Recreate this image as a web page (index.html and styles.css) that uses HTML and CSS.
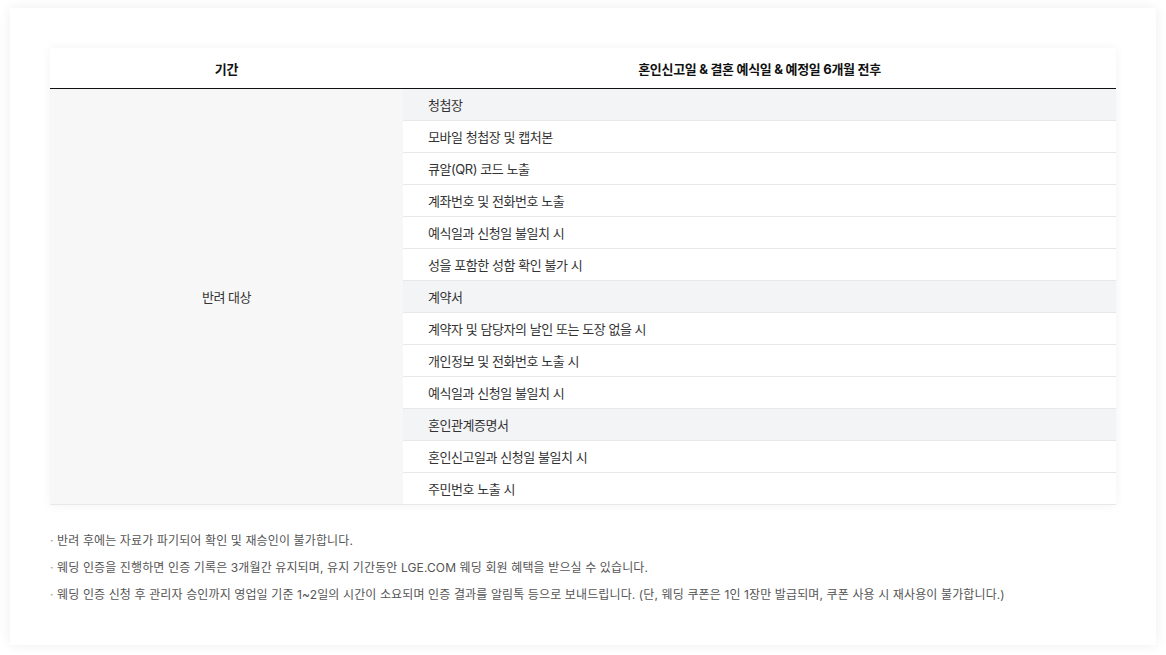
FILE: index.html
```html
<!DOCTYPE html>
<html lang="ko">
<head>
<meta charset="utf-8">
<link rel="stylesheet" href="styles.css">
</head>
<body>
<div class="card">
  <table class="tbl">
    <thead>
      <tr>
        <th class="col-left">기간</th>
        <th>혼인신고일 &amp; 결혼 예식일 &amp; 예정일 6개월 전후</th>
      </tr>
    </thead>
    <tbody>
      <tr><td class="col-left" rowspan="13">반려 대상</td><td class="grp">청첩장</td></tr>
      <tr><td>모바일 청첩장 및 캡처본</td></tr>
      <tr><td>큐알(QR) 코드 노출</td></tr>
      <tr><td>계좌번호 및 전화번호 노출</td></tr>
      <tr><td>예식일과 신청일 불일치 시</td></tr>
      <tr><td>성을 포함한 성함 확인 불가 시</td></tr>
      <tr><td class="grp">계약서</td></tr>
      <tr><td>계약자 및 담당자의 날인 또는 도장 없을 시</td></tr>
      <tr><td>개인정보 및 전화번호 노출 시</td></tr>
      <tr><td>예식일과 신청일 불일치 시</td></tr>
      <tr><td class="grp">혼인관계증명서</td></tr>
      <tr><td>혼인신고일과 신청일 불일치 시</td></tr>
      <tr><td>주민번호 노출 시</td></tr>
    </tbody>
  </table>
  <ul class="notes">
    <li>반려 후에는 자료가 파기되어 확인 및 재승인이 불가합니다.</li>
    <li>웨딩 인증을 진행하면 인증 기록은 3개월간 유지되며, 유지 기간동안 LGE.COM 웨딩 회원 혜택을 받으실 수 있습니다.</li>
    <li>웨딩 인증 신청 후 관리자 승인까지 영업일 기준 1~2일의 시간이 소요되며 인증 결과를 알림톡 등으로 보내드립니다. (단, 웨딩 쿠폰은 1인 1장만 발급되며, 쿠폰 사용 시 재사용이 불가합니다.)</li>
  </ul>
</div>
</body>
</html>
```
FILE: styles.css
```css
html, body {
  margin: 0;
  padding: 0;
  background: #fff;
}
body {
  padding: 8px 10px;
  font-family: "Inter", "Noto Sans CJK KR", sans-serif;
  color: #222;
}
.card {
  background: #fff;
  box-shadow: 0 0 12px rgba(0, 0, 0, 0.07);
  padding: 40px 40px 41px;
}
.tbl {
  width: 100%;
  border-collapse: collapse;
  table-layout: fixed;
  box-shadow: 0 0 10px rgba(0, 0, 0, 0.05);
  font-size: 13px;
}
.tbl th {
  height: 40px;
  padding: 0;
  font-weight: 700;
  font-size: 13px;
  letter-spacing: -0.3px;
  color: #111;
  background: #fff;
  border-bottom: 1px solid #111;
  text-align: center;
}
.tbl th.col-left {
  width: 353px;
}
.tbl td {
  height: 31px;
  padding: 0 0 0 25px;
  border-bottom: 1px solid #e8e8e8;
  color: #333;
  letter-spacing: -0.45px;
  background: #fff;
  text-align: left;
}
.tbl td.col-left {
  background: #f7f7f7;
  text-align: center;
  padding: 0;
  border-bottom: 1px solid #e8e8e8;
}
.tbl td.grp {
  background: #f3f4f6;
}
.notes {
  list-style: none;
  margin: 27px 0 0;
  padding: 0;
  font-size: 12px;
  letter-spacing: 0.12px;
  color: #555;
}
.notes li {
  line-height: 18px;
  margin-bottom: 9px;
}
.notes li::before {
  content: "· ";
  color: #999;
}
.notes li:last-child {
  margin-bottom: 0;
}
```
